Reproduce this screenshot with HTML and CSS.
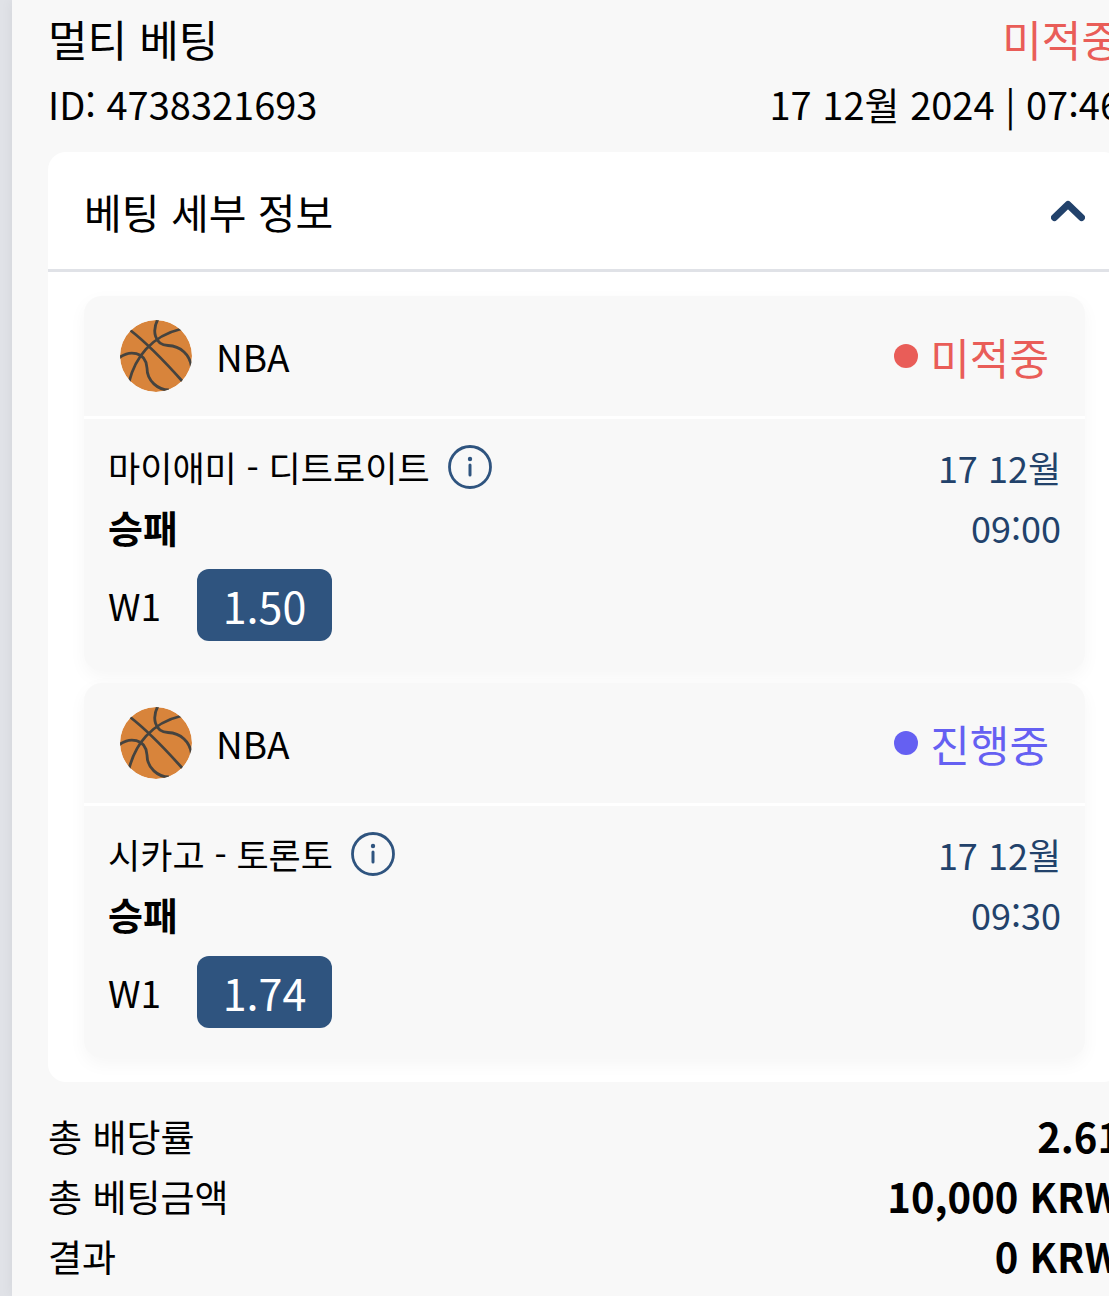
FILE: index.html
```html
<!DOCTYPE html>
<html lang="ko">
<head>
    <meta charset="UTF-8">
    <meta name="viewport" content="width=device-width, initial-scale=1.0">
    <title>멀티 베팅</title>
    <link rel="stylesheet" href="styles.css">
</head>
<body>

    <svg width="0" height="0" class="sprite" aria-hidden="true">
        <symbol id="basketball" viewBox="0 0 72 72">
            <clipPath id="ballClip"><circle cx="36" cy="36" r="36"/></clipPath>
            <g clip-path="url(#ballClip)">
                <circle cx="36" cy="36" r="36" fill="#d8843b"/>
                <g fill="none" stroke="#45433f" stroke-width="2.8">
                    <path d="M10 10C28 24 47 44 63 62"/>
                    <path d="M9 62C15 38 31 16 61 9"/>
                    <path d="M38 -1C32 10 34 25 48 25.500C61 26 70 35 71.500 47"/>
                    <path d="M-1 38C9 30 26 31 27 48C27 61 38 70 49 70"/>
                </g>
            </g>
        </symbol>
        <symbol id="info" viewBox="0 0 44 44">
            <circle cx="22" cy="22" r="20.500" fill="none" stroke="#2f547f" stroke-width="2.800"/>
            <circle cx="22" cy="14" r="2.200" fill="#2f547f"/>
            <path d="M22 20V30" stroke="#2f547f" stroke-width="3" stroke-linecap="round"/>
        </symbol>
    </svg>

    <main class="bet">
        <div class="row bet-title">
            <h1>멀티 베팅</h1>
            <span class="lost">미적중</span>
        </div>
        <div class="row bet-meta">
            <span>ID: 4738321693</span>
            <span>17 12월 2024 | 07:46</span>
        </div>

        <section class="details">
            <button type="button" class="row details-toggle" id="toggle" aria-expanded="true" aria-controls="matches">
                베팅 세부 정보
                <svg width="34" height="22" viewBox="0 0 34 22" aria-hidden="true">
                    <path d="M3.500 17.500L17 4.500L30.500 17.500" fill="none" stroke="#22426b" stroke-width="7" stroke-linecap="round" stroke-linejoin="round"/>
                </svg>
            </button>

            <div class="matches" id="matches">
                <article class="match">
                    <div class="row match-header">
                        <div class="league">
                            <svg width="72" height="72" aria-hidden="true"><use href="#basketball"/></svg>
                            <span>NBA</span>
                        </div>
                        <span class="status lost">미적중</span>
                    </div>
                    <div class="row match-body">
                        <div>
                            <div class="teams">
                                <span>마이애미 - 디트로이트</span>
                                <button type="button" class="info" aria-label="정보"><svg width="44" height="44"><use href="#info"/></svg></button>
                            </div>
                            <div class="market">승패</div>
                            <div class="pick">
                                <span>W1</span>
                                <span class="odds">1.50</span>
                            </div>
                        </div>
                        <time class="date">17 12월<br>09:00</time>
                    </div>
                </article>

                <article class="match">
                    <div class="row match-header">
                        <div class="league">
                            <svg width="72" height="72" aria-hidden="true"><use href="#basketball"/></svg>
                            <span>NBA</span>
                        </div>
                        <span class="status live">진행중</span>
                    </div>
                    <div class="row match-body">
                        <div>
                            <div class="teams">
                                <span>시카고 - 토론토</span>
                                <button type="button" class="info" aria-label="정보"><svg width="44" height="44"><use href="#info"/></svg></button>
                            </div>
                            <div class="market">승패</div>
                            <div class="pick">
                                <span>W1</span>
                                <span class="odds">1.74</span>
                            </div>
                        </div>
                        <time class="date">17 12월<br>09:30</time>
                    </div>
                </article>
            </div>
        </section>

        <dl class="totals">
            <div class="row"><dt>총 배당률</dt><dd>2.61</dd></div>
            <div class="row"><dt>총 베팅금액</dt><dd>10,000 KRW</dd></div>
            <div class="row"><dt>결과</dt><dd>0 KRW</dd></div>
        </dl>
    </main>

    <script>
        var toggle = document.getElementById("toggle");
        toggle.addEventListener("click", function() {
            var matches = document.getElementById("matches");
            matches.hidden = !matches.hidden;
            toggle.setAttribute("aria-expanded", String(!matches.hidden));
        });
    </script>

</body>
</html>
```
FILE: styles.css
```css
* {
    box-sizing: border-box;
}

html {
    overflow-x: hidden;
    background-color: #e0e2e7;
}

body {
    margin: 0;
    font-family: "Noto Sans CJK KR", sans-serif;
    font-size: 37px;
    line-height: 60px;
    color: #000;
    overflow-x: hidden;
}

button {
    font: inherit;
    color: inherit;
    border: 0;
    padding: 0;
    background: none;
    cursor: pointer;
}

svg {
    display: block;
    flex-shrink: 0;
}

.sprite {
    position: absolute;
}

/* the sheet runs past the right edge of the window */
.bet {
    min-height: 100vh;
    margin-left: 12px;
    margin-right: -48px;
    padding: 2px 36px 0;
    background-color: #f8f8f8;
    box-shadow: 0 0 12px rgba(0, 0, 0, 0.06);
}

.row {
    display: flex;
    justify-content: space-between;
    align-items: center;
}

.bet-title {
    font-size: 43px;
    line-height: 72px;
}

.bet-title h1 {
    margin: 0;
    font-size: inherit;
    font-weight: 400;
}

.bet-meta {
    font-size: 38px;
    margin-bottom: 18px;
}

.lost {
    color: #e95d58;
}

.live {
    color: #6560f2;
}

.details {
    background-color: #fff;
    border-radius: 18px;
}

.details-toggle {
    width: 100%;
    height: 120px;
    padding: 0 36px;
    font-size: 41px;
    border-bottom: 3px solid #e0e2e7;
}

.matches {
    padding: 24px 36px;
}

.match {
    background-color: #f8f8f8;
    border-radius: 18px;
    box-shadow: 0 6px 18px rgba(0, 0, 0, 0.04);
}

.match + .match {
    margin-top: 12px;
}

.match-header {
    height: 123px;
    padding: 0 36px;
    border-bottom: 3px solid #fff;
}

.league {
    display: flex;
    align-items: center;
    gap: 24px;
}

.status {
    display: flex;
    align-items: center;
    gap: 12px;
    font-size: 43px;
}

.status::before {
    content: "";
    width: 24px;
    height: 24px;
    border-radius: 50%;
    background-color: currentColor;
}

.match-body {
    align-items: flex-start;
    padding: 18px 24px 30px;
}

.teams {
    display: flex;
    align-items: center;
    gap: 18px;
    font-size: 35px;
}

.market {
    font-size: 38px;
    font-weight: 700;
}

.pick {
    display: flex;
    align-items: center;
    gap: 36px;
    margin-top: 12px;
}

.odds {
    min-width: 135px;
    padding: 0 24px;
    border-radius: 12px;
    background-color: #2f547f;
    color: #fff;
    font-size: 43px;
    line-height: 72px;
    text-align: center;
}

.date {
    color: #22426b;
    font-size: 36px;
    text-align: right;
}

.totals {
    margin: 24px 0 0;
}

.totals dd {
    margin: 0;
    font-size: 40px;
    font-weight: 700;
}
```
